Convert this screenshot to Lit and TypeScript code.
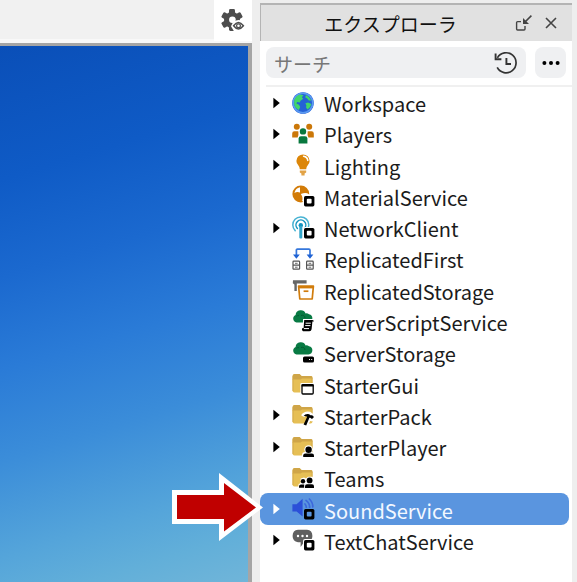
import { LitElement, html, svg, css, nothing, type TemplateResult, type SVGTemplateResult } from "lit";
import { customElement, property } from "lit/decorators.js";

const squareBadge = svg`
  <rect x="11" y="10" width="12" height="12" rx="2" fill="var(--paper)"/>
  <rect x="12" y="11" width="10.4" height="10.4" rx="1.6" fill="#000"/>
  <rect x="14.8" y="13.8" width="4.8" height="4.8" rx="1" fill="var(--paper)"/>`;

const folder = svg`
  <path d="M0.5 3.5Q0.5 1 2.5 1H7.5L9.5 3H19Q20.5 3 20.5 5V17.5Q20.5 19.5 18.5 19.5H2.5Q0.5 19.5 0.5 17.5Z" fill="#e6bf55"/>
  <path d="M0.5 3.5Q0.5 1 2.5 1H7.5L9.5 3H19Q20.5 3 20.5 5V5.4H10L8.6 6.6H0.5Z" fill="#cfa548"/>
  <path d="M1 6V18M20 5V18" stroke="#d4ab4c" stroke-width="1" fill="none"/>`;

const cloud = svg`
  <path d="M4.5 12.5A4 4 0 0 1 3.6 4.9 5.2 5.2 0 0 1 13.6 3.4 4.4 4.4 0 0 1 17 4.2 4.2 4.2 0 0 1 16.5 12.5Z" fill="#087a43"/>
  <path d="M9 5.5Q12.6 4.6 13 8M4.4 6.4Q5.4 5.2 7 5.7" stroke="#045c31" stroke-width="1" fill="none"/>`;

const icons: Record<string, SVGTemplateResult> = {
  globe: svg`
    <circle cx="11" cy="11" r="10.8" fill="#2462d6"/>
    <circle cx="11" cy="11" r="9.8" fill="none" stroke="#5b9af2" stroke-width="1.6"/>
    <path d="M2.2 8Q3.8 3.8 8 2.4L11.6 3.2 9.8 5.2 11.2 6.8 8.8 8.6 7.6 10.4 5.2 10 4.4 11.6 7 12.8 8.2 15 6.8 18Q3 16 2.2 12.5Z" fill="#41d66a"/>
    <path d="M14 3Q18 4.8 19.4 8.6L16.8 8.4 15.2 6.4 13.2 5.2ZM13.4 11.2L16 10.4 19.4 12Q18.6 15.6 15.6 17.6L14 15.4 14.4 13.4Z" fill="#41d66a"/>`,
  players: svg`
    <g fill="#cb7708"><circle cx="4.8" cy="3.8" r="3"/><circle cx="17.2" cy="3.8" r="3"/>
    <path d="M0.2 14.6V10.4Q0.2 8.2 2.4 8.2H6.4V14.6ZM21.8 14.6V10.4Q21.8 8.2 19.6 8.2H15.6V14.6Z"/></g>
    <circle cx="11" cy="8.4" r="4.2" fill="#fff"/>
    <path d="M5.6 21.5V15Q5.6 12 8.6 12H13.4Q16.4 12 16.4 15V21.5Z" fill="#fff"/>
    <circle cx="11" cy="8.4" r="3.2" fill="#08783e"/>
    <path d="M6.6 20.6V15.6Q6.6 13.2 9 13.2H13Q15.4 13.2 15.4 15.6V20.6Z" fill="#08783e"/>`,
  bulb: svg`
    <path d="M11 0.4A6.6 6.6 0 0 1 17.6 7Q17.6 9.6 15.6 11.6 14.4 13 14.2 15.2H7.8Q7.6 13 6.4 11.6 4.4 9.6 4.4 7A6.6 6.6 0 0 1 11 0.4Z" fill="#dc8608"/>
    <path d="M11.6 2.2Q15.4 2.8 15.8 6.4" stroke="#fff" stroke-width="1.6" fill="none" stroke-linecap="round"/>
    <path d="M7.8 16.6H14.2V18.4L12.6 19.6V21.4H9.4V19.6L7.8 18.4Z" fill="#e2a347"/>`,
  material: svg`
    <circle cx="8.8" cy="9" r="8.4" fill="#d27b07"/>
    <path d="M8 7.6V2.2Q3.6 3 2.4 8Q5.2 6.4 8 7.6ZM8.8 9Q14 7 17.2 9.4L15.4 14 10 16.6Q11.4 12.4 8.8 9Z" fill="#fff"/>
    ${squareBadge}`,
  network: svg`
    <g fill="none" stroke="#1595bf" stroke-width="1.5" stroke-linecap="round">
      <path d="M3.2 13.6A8 8 0 1 1 14.6 13.4" stroke="#48b3d3"/>
      <path d="M5.4 11.4A4.9 4.9 0 1 1 12.4 11.4"/>
    </g>
    <circle cx="8.8" cy="8.2" r="2.2" fill="#1595bf"/>
    <rect x="7.3" y="9" width="3" height="12.6" rx="1" fill="#32a6cb"/>
    ${squareBadge}`,
  replicate: svg`
    <path d="M4.4 7.4V2.2Q4.4 1.2 5.4 1.2H17Q18 1.2 18 2.2V7.4" fill="none" stroke="#3577dc" stroke-width="1.7"/>
    <path d="M1 6.4H7.8L4.4 10.8ZM14.6 6.4H21.4L18 10.8Z" fill="#1f62d4"/>
    <g fill="none" stroke="#555" stroke-width="1.2">
      <rect x="1" y="13.2" width="6.6" height="8" rx="0.8"/><rect x="14.6" y="13.2" width="6.6" height="8" rx="0.8"/>
      <path d="M1 17.2H7.6M14.6 17.2H21.2"/><path d="M3 15.3H5.6M3 19.2H5.6M16.6 15.3H19.2M16.6 19.2H19.2" stroke-width="0.9"/>
    </g>`,
  storage: svg`
    <path d="M1 1.2H14.6V4.4H4.8V12H2.4V5.6L0.8 4.2Z" fill="#666"/>
    <path d="M5 5H22.4V21.2H6.6L6 11Z" fill="#fff"/>
    <path d="M6.6 7.2H21.4L20.2 20H7.8Z" fill="#fff" stroke="#d17c0c" stroke-width="1.7" stroke-linejoin="round"/>
    <path d="M6.8 8.4H21.2" stroke="#d17c0c" stroke-width="2"/>
    <path d="M11.6 12.2H16.4" stroke="#d17c0c" stroke-width="1.7"/>`,
  script: svg`${cloud}
    <path d="M11 9H22.6V12.6L21 21.8H9V17.4L10.8 16.6Z" fill="#fff"/>
    <path d="M12.2 10H20.4Q22 10 21.8 11.6H20.4L19.6 19.2Q19.2 21.2 17.4 21.2H11Q9.4 21 10 18.2H11.6Z" fill="#000"/>
    <path d="M13.6 13.2H18.8M13.2 15.6H18.4M12 18.6H17" stroke="#fff" stroke-width="1"/>`,
  server: svg`${cloud}
    <rect x="10" y="13" width="13" height="9" rx="2" fill="#fff"/>
    <rect x="11" y="14.4" width="11" height="6.2" rx="1.6" fill="#000"/>
    <path d="M17 17.5H18M19.2 17.5H20.2" stroke="#fff" stroke-width="1"/>`,
  gui: svg`${folder}
    <rect x="8.4" y="10" width="14" height="12" rx="1" fill="#fff"/>
    <rect x="10" y="11.6" width="11.2" height="9.4" rx="1" fill="#fff" stroke="#000" stroke-width="1.3"/>
    <path d="M9.6 12.4H21.6" stroke="#000" stroke-width="2.2"/>`,
  pack: svg`${folder}
    <path d="M10.6 12.2Q13 8.6 17.4 9.4L21.8 12.6 19.8 15.4 17.6 14.4 13.8 21.6" fill="none" stroke="#fff" stroke-width="3.6"/>
    <path d="M11.4 12.2Q13.4 9.4 17.2 10.2L18.4 11.2 20.2 11.2 22 13 20 15 18.2 13.8 17.4 13.8 14.2 21.4 11.6 20.4 15.2 12.8Q13.4 11.6 11.4 12.2Z" fill="#000"/>`,
  player: svg`${folder}
    <circle cx="16.6" cy="13.6" r="4.3" fill="#fff"/><path d="M10 22V19Q10 16 13 16H20Q23 16 23 19V22Z" fill="#fff"/>
    <circle cx="16.6" cy="13.8" r="3.2" fill="#000"/><path d="M11.2 21V19.4Q11.2 17.6 13.4 17.6H19.8Q22 17.6 22 19.4V21Z" fill="#000"/>`,
  teams: svg`${folder}
    <path d="M6.4 22V17.4L8.6 15.8V11.6L12 10.4 14 11.4 16 9.8H20.6L22 11.6V22Z" fill="#fff"/>
    <g fill="#000"><circle cx="11" cy="14.2" r="2.2"/><path d="M7 20.8V19.2Q7 17.4 9 17.4H12.2V20.8Z"/>
    <circle cx="17.6" cy="13.4" r="2.9"/><path d="M13 21V19.2Q13 17.2 15 17.2H20Q22 17.2 22 19.2V21Z"/></g>`,
  sound: svg`
    <path d="M0.4 6.2H4.6L10.6 0.8V18.4L4.6 13.4H0.4Z" fill="#2b50d8"/>
    <g fill="none" stroke="#3c68dc" stroke-width="1.7" stroke-linecap="round">
      <path d="M13 6Q14.8 8 14.2 11"/><path d="M14 2.4Q18 5.4 17.6 10"/><path d="M17.4 1Q21 4.4 20.8 9"/>
    </g>
    ${squareBadge}`,
  chat: svg`
    <path d="M6 0.8H15Q20.4 1.4 20.4 7 20.4 12.6 15 13.2H12L8.6 18V13.2H6Q0.6 12.6 0.6 7 0.6 1.4 6 0.8Z" fill="#5f5f5f"/>
    <g fill="#fff"><circle cx="6" cy="7" r="1.2"/><circle cx="10.5" cy="7" r="1.2"/><circle cx="15" cy="7" r="1.2"/></g>
    ${squareBadge}`,
};

interface Service { name: string; icon: string; expandable?: boolean; selected?: boolean }

const services: Service[] = [
  { name: "Workspace", icon: "globe", expandable: true },
  { name: "Players", icon: "players", expandable: true },
  { name: "Lighting", icon: "bulb", expandable: true },
  { name: "MaterialService", icon: "material" },
  { name: "NetworkClient", icon: "network", expandable: true },
  { name: "ReplicatedFirst", icon: "replicate" },
  { name: "ReplicatedStorage", icon: "storage" },
  { name: "ServerScriptService", icon: "script" },
  { name: "ServerStorage", icon: "server" },
  { name: "StarterGui", icon: "gui" },
  { name: "StarterPack", icon: "pack", expandable: true },
  { name: "StarterPlayer", icon: "player", expandable: true },
  { name: "Teams", icon: "teams" },
  { name: "SoundService", icon: "sound", expandable: true, selected: true },
  { name: "TextChatService", icon: "chat", expandable: true },
];

const controls = css`
  * { box-sizing: border-box; }
  svg { display: block; flex: none; }
  button {
    display: grid; place-items: center; flex: none;
    border: 0; padding: 0; margin: 0; background: none; color: inherit; font: inherit;
  }
`;

@customElement("tree-row")
class TreeRow extends LitElement {
  @property({ attribute: false }) service!: Service;

  static styles = [controls, css`
    :host { display: grid; position: relative; --paper: #fff; }
    .row {
      display: grid; grid-template-columns: 32px 22px 1fr; align-items: center;
      margin-right: 3px; border-radius: 8px; color: #1b1b1b;
    }
    .selected { --paper: #5a95df; background: #5a95df; color: #f3f8ff; }
    .caret { width: 32px; height: 24px; color: #000; }
    .selected .caret { color: #fff; }
    .icon { grid-column: 2; }
    .name { padding: 2px 0 0 10px; font-size: 20px; line-height: 27px; white-space: nowrap; font-kerning: normal; }
    .pointer { position: absolute; right: calc(100% - 3px); top: -20px; }
  `];

  render(): TemplateResult {
    const s = this.service;
    return html`
      <div class="row ${s.selected ? "selected" : ""}">
        ${s.expandable ? html`
          <button class="caret" aria-label="${s.name}">
            <svg width="7" height="12" viewBox="0 0 7 12"><path d="M0.4 0.8L6.8 6 0.4 11.2Z" fill="currentColor"/></svg>
          </button>` : nothing}
        <svg class="icon" width="22" height="22" viewBox="0 0 22 22" overflow="visible" aria-hidden="true">${icons[s.icon]}</svg>
        <span class="name">${s.name}</span>
      </div>
      ${s.selected ? html`
        <svg class="pointer" width="91" height="74" viewBox="0 0 91 74" aria-hidden="true">
          <path d="M0 17H47V0L91 34.5 47 68V51H0Z" fill="#fff"/>
          <path d="M5 22H52V10L84 34.5 52 58.5V46H5Z" fill="#c00000"/>
        </svg>` : nothing}`;
  }
}

@customElement("app-root")
class AppRoot extends LitElement {
  static styles = [controls, css`
    :host {
      display: grid; grid-template-columns: minmax(0, 1fr) 312px; column-gap: 8px;
      min-height: 100vh; padding-right: 5px; box-sizing: border-box; overflow: hidden;
      background: #eeeeee; color: #111;
      font-family: "Noto Sans CJK JP", "Noto Sans", sans-serif;
    }
    .stage { display: flex; flex-direction: column; }
    .toolbar {
      display: flex; justify-content: flex-end; height: 43px;
      border-bottom: 4px solid #f8f8f8; background: #f1f1f1;
    }
    .settings { width: 38px; height: 41px; background: #fff; color: #4d4d4d; }
    .viewport {
      flex: 1; border: solid #a5a5a5; border-width: 3px 4px 0 0;
      background: linear-gradient(163deg, #0a4fb8 0%, #0f5bc6 22%, #1b69cf 38%, #2a7bd7 53%, #3b8dd9 68%, #55a5da 84%, #62afd9 92%, #70b5d9 100%);
    }
    .explorer { display: flex; flex-direction: column; margin-top: 3px; background: #fff; }
    .header {
      display: flex; align-items: center; height: 38px; padding: 0 8px 0 10px;
      border: solid #b4b4b4; border-width: 2px 0 0 1px; background: #e1e1e1;
    }
    h1 { flex: 1; margin: 0; padding-top: 2px; font-size: 19px; line-height: 28px; font-weight: 400; text-align: center; }
    .tool { width: 27px; height: 28px; color: #444; }
    .search {
      display: flex; gap: 9px; padding: 6px 0 7px; margin: 0 6px;
    }
    .field {
      display: flex; flex: 1; align-items: center; height: 31px; padding-right: 6px;
      border-radius: 8px; background: #eff0f2;
    }
    input {
      flex: 1; min-width: 0; height: 31px; padding: 2px 0 0 8px; margin: 0;
      border: 0; outline: 0; background: none; font: inherit; font-size: 19px; color: #111;
    }
    input::placeholder { color: #777; opacity: 1; }
    .history { width: 28px; height: 28px; color: #333; }
    .more { width: 31px; height: 31px; border-radius: 8px; background: #eff0f2; }
    .tree {
      display: grid; grid-auto-rows: minmax(31px, 1fr); flex: 1;
      margin: 0; padding: 0 0 26px; list-style: none;
    }
    .rule { height: 2px; margin-left: 6px; background: #f0f0f0; }
    .item { display: grid; }
  `];

  render(): TemplateResult {
    return html`
      <main class="stage">
        <div class="toolbar">
          <button class="settings" aria-label="設定">
            <svg width="24" height="24" viewBox="0 0 24 24">
              <g fill="currentColor">
                <circle cx="11" cy="11" r="8"/>
                <rect x="8" y="0" width="6" height="22" rx="1.4"/>
                <rect x="8" y="0" width="6" height="22" rx="1.4" transform="rotate(60 11 11)"/>
                <rect x="8" y="0" width="6" height="22" rx="1.4" transform="rotate(120 11 11)"/>
              </g>
              <circle cx="11.4" cy="10.8" r="3.3" fill="#fff"/>
              <path d="M10 17.2Q12.4 11 17.4 11 22 11 24 16V24H14Z" fill="#fff"/>
              <path d="M12.6 16.8Q17.4 10.2 22.4 16.8 17.4 23.2 12.6 16.8Z" fill="#fff" stroke="currentColor" stroke-width="1.5"/>
              <circle cx="17.5" cy="16.8" r="1.9" fill="none" stroke="currentColor" stroke-width="1.2"/>
            </svg>
          </button>
        </div>
        <div class="viewport"></div>
      </main>
      <aside class="explorer">
        <header class="header">
          <h1>エクスプローラ</h1>
          <button class="tool" aria-label="フロート">
            <svg width="18" height="18" viewBox="0 0 18 18" fill="none" stroke="currentColor">
              <path d="M6 7.6H2.6Q1.6 7.6 1.6 8.6V15Q1.6 16 2.6 16H9Q10 16 10 15V12" stroke-width="1.4"/>
              <path d="M16.4 1.6L9 9" stroke-width="1.6"/><path d="M8 4V10H14Z" fill="currentColor" stroke="none"/>
            </svg>
          </button>
          <button class="tool" aria-label="閉じる">
            <svg width="12" height="12" viewBox="0 0 12 12"><path d="M1 1L11 11M11 1L1 11" stroke="currentColor" stroke-width="1.6"/></svg>
          </button>
        </header>
        <div class="search">
          <div class="field">
            <input type="text" placeholder="サーチ" aria-label="サーチ">
            <button class="history" aria-label="履歴">
              <svg width="24" height="24" viewBox="0 0 24 24" fill="none" stroke="currentColor" stroke-width="1.7">
                <path d="M3.4 6.8A10 10 0 1 1 3.2 16.4"/><path d="M1.6 2.6V8.2H7.4" stroke-width="1.9"/>
                <path d="M12.4 7V13H17" stroke-width="1.9"/>
              </svg>
            </button>
          </div>
          <button class="more" aria-label="その他">
            <svg width="18" height="4" viewBox="0 0 18 4"><circle cx="2.4" cy="2" r="2"/><circle cx="9" cy="2" r="2"/><circle cx="15.6" cy="2" r="2"/></svg>
          </button>
        </div>
        <div class="rule"></div>
        <ul class="tree">
          ${services.map((s) => html`<li class="item"><tree-row .service=${s}></tree-row></li>`)}
        </ul>
      </aside>`;
  }
}
